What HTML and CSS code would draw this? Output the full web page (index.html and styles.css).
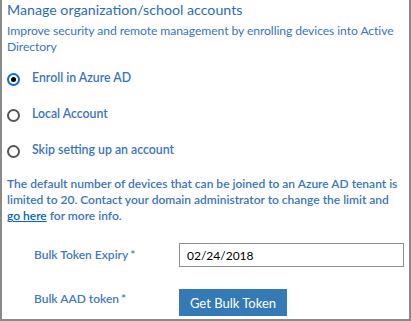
FILE: index.html
```html
<!DOCTYPE html>
<html lang="en">
<head>
    <meta charset="UTF-8">
    <title>Manage organization/school accounts</title>
    <link rel="stylesheet" href="styles.css">
</head>
<body>
    <div class="panel">
        <h1 class="title">Manage organization/school accounts</h1>
        <p class="intro">Improve security and remote management by enrolling devices into Active Directory</p>

        <div class="options">
            <label class="option"><span class="radio checked"></span>Enroll in Azure AD</label>
            <label class="option"><span class="radio"></span>Local Account</label>
            <label class="option"><span class="radio"></span>Skip setting up an account</label>
        </div>

        <p class="note">The default number of devices that can be joined to an Azure AD tenant is limited to 20. Contact your domain administrator to change the limit and <a href="#">go here</a> for more info.</p>

        <div class="field">
            <span class="field-label">Bulk Token Expiry<span class="req">*</span></span>
            <input class="text-input" type="text" value="02/24/2018">
        </div>
        <div class="field field-top">
            <span class="field-label">Bulk AAD token<span class="req">*</span></span>
            <button class="button">Get Bulk Token</button>
        </div>
    </div>
</body>
</html>
```

FILE: styles.css
```css
body {
    margin: 0;
    font-family: Lato, "Open Sans", sans-serif;
    background-color: white;
}
.panel {
    box-sizing: border-box;
    width: 411px;
    height: 321px;
    border: 2px solid #8a8a8a;
    border-top: none;
    padding: 0 5px;
    color: #3a74c1;
}
.title {
    margin: 0;
    font-size: 14.2px;
    font-weight: 400;
    line-height: 20px;
    color: #2f6cb7;
}
.intro {
    margin: 3px 0 0;
    font-size: 12.2px;
    letter-spacing: -0.1px;
    line-height: 16px;
}
.options {
    display: flex;
    flex-direction: column;
    gap: 16px;
    margin-top: 13px;
}
.option {
    display: flex;
    align-items: center;
    gap: 12px;
    font-size: 12.3px;
    font-weight: 600;
    line-height: 20px;
}
.radio {
    box-sizing: border-box;
    width: 13px;
    height: 13px;
    margin-top: 2px;
    border: 2px solid #555;
    border-radius: 50%;
    display: flex;
    align-items: center;
    justify-content: center;
}
.radio.checked {
    border-color: #0a6ed1;
}
.radio.checked::after {
    content: "";
    width: 5px;
    height: 5px;
    border-radius: 50%;
    background-color: #000;
}
.note {
    margin: 16px 0 0;
    font-size: 12px;
    font-weight: 600;
    line-height: 16px;
}
.note a {
    color: #0563c1;
}
.field {
    display: grid;
    grid-template-columns: 145px 225px;
    align-items: center;
    padding-left: 27px;
    margin-top: 19px;
}
.field-top {
    align-items: start;
    margin-top: 22px;
}
.field-label {
    font-size: 12px;
    font-weight: 600;
    line-height: 20px;
    color: #4479c4;
}
.req {
    margin-left: 2px;
}
.text-input {
    box-sizing: border-box;
    width: 225px;
    height: 24px;
    border: 1px solid #8f8f8f;
    padding: 0 7px;
    font-family: inherit;
    font-size: 12px;
    color: #000;
    outline: none;
}
.button {
    width: 108px;
    height: 27px;
    border: none;
    background-color: #337ab7;
    color: white;
    font-family: inherit;
    font-size: 13px;
    padding: 0;
}
```
